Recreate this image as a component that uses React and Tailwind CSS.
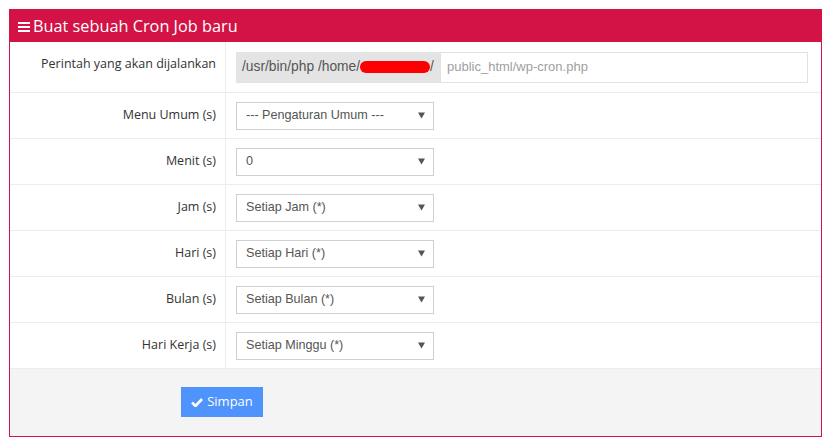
import React from "react";

const rows = [
  ["Menu Umum (s)", "--- Pengaturan Umum ---"],
  ["Menit (s)", "0"],
  ["Jam (s)", "Setiap Jam (*)"],
  ["Hari (s)", "Setiap Hari (*)"],
  ["Bulan (s)", "Setiap Bulan (*)"],
  ["Hari Kerja (s)", "Setiap Minggu (*)"],
];

const os = { fontFamily: '"Open Sans", sans-serif' };
const ar = { fontFamily: '"Liberation Sans", Arial, sans-serif' };

function Select({ value }) {
  return (
    <div className="w-[198px] h-[28px] border border-[#cfcfcf] bg-white flex items-center justify-between pl-[9px] pr-[8px] text-[12.6px] text-[#555]" style={ar}>
      <span>{value}</span>
      <svg width="7" height="7" viewBox="0 0 7 7"><path d="M0 0.5 L7 0.5 L3.5 6.5 Z" fill="#555" /></svg>
    </div>
  );
}

export default function App() {
  return (
    <div className="w-[830px] h-[446px] bg-white pt-[9px] pl-[9px]">
      <div className="w-[813px] h-[428px] border border-[#d31245] flex flex-col">
        <div className="h-[32px] bg-[#d31245] flex items-center pl-[8px] text-white text-[16.3px]" style={os}>
          <svg width="12" height="10" viewBox="0 0 12 10" className="mr-[3px] mt-[2px]">
            <rect x="0" y="0" width="12" height="2" fill="white" />
            <rect x="0" y="4" width="12" height="2" fill="white" />
            <rect x="0" y="8" width="12" height="2" fill="white" />
          </svg>
          <span>Buat sebuah Cron Job baru</span>
        </div>
        <div className="flex h-[51px] border-b border-[#ececec]">
          <div className="w-[216px] border-r border-[#ececec] flex justify-end pr-[9px] pt-[13px] text-[12.5px] text-[#333]" style={os}>
            Perintah yang akan dijalankan
          </div>
          <div className="flex-1 flex items-center pl-[10px] pr-[13px]">
            <div className="flex w-full h-[31px]">
              <div className="bg-[#e4e4e4] flex items-center pl-[6px] pr-[6px] text-[13.8px] text-[#555]" style={ar}>
                <span>/usr/bin/php /home/</span>
                <span className="inline-block w-[70px] h-[12px] bg-[#ff0000] rounded-[6px]" />
                <span>/</span>
              </div>
              <div className="flex-1 border border-[#e2e2e2] flex items-center pl-[6px] text-[13px] text-[#a0a0a0]" style={ar}>
                public_html/wp-cron.php
              </div>
            </div>
          </div>
        </div>
        {rows.map(([label, value]) => (
          <div key={label} className="flex h-[46px] border-b border-[#ececec]">
            <div className="w-[216px] border-r border-[#ececec] flex items-center justify-end pr-[9px] text-[12.5px] text-[#333]" style={os}>
              {label}
            </div>
            <div className="flex-1 flex items-center pl-[10px]">
              <Select value={value} />
            </div>
          </div>
        ))}
        <div className="flex-1 bg-[#f4f4f4] pl-[171px] pt-[18px]">
          <button className="w-[82px] h-[30px] bg-[#4f93fc] text-white text-[13px] flex items-center justify-center gap-[4px]" style={os}>
            <svg width="12" height="10" viewBox="0 0 12 10"><path d="M1 5.5 L4.5 9 L11 2" stroke="white" strokeWidth="2.6" fill="none" /></svg>
            Simpan
          </button>
        </div>
      </div>
    </div>
  );
}
